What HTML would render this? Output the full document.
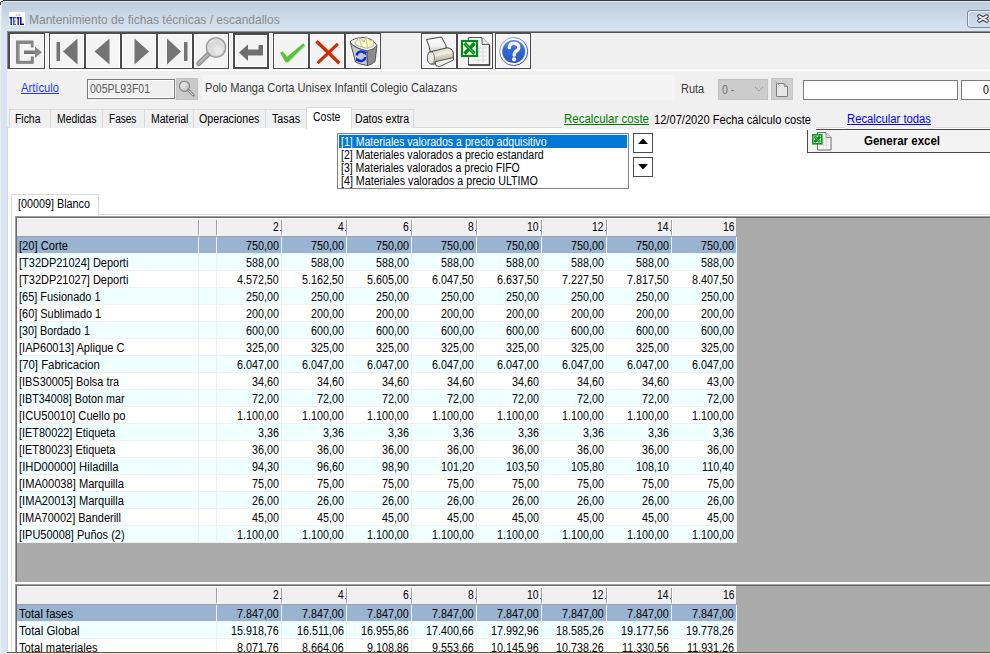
<!DOCTYPE html><html><head><meta charset="utf-8"><style>
*{margin:0;padding:0;box-sizing:border-box}
html,body{width:990px;height:654px;overflow:hidden;background:#f0f0f0;font-family:"Liberation Sans",sans-serif;font-size:12px;color:#000}
div,span,svg{position:absolute}
div{white-space:pre}
.t{line-height:13px;transform-origin:0 0}
.gb{background:#ababab;border-top:1px solid #a0a0a0;border-left:1px solid #a0a0a0;box-shadow:inset 1px 1px 0 #696969}
.hdr{background:#f0f0f0;border-top:1px solid #fff;border-bottom:1px solid #a0a0a0}
.hs{width:2px;border-left:1px solid #a0a0a0;border-right:1px solid #fff}
.hd{width:1px;height:1px;background:#6a3a7a}
.row{left:17px;width:720px;height:17px}
.sel{background:#99b4d1}
.cy{background:#f0ffff}
.wh{background:#fff}
.vs{width:1px;background:#f0f0f0}
.hsep{left:17px;width:720px;height:1px;background:#f0f0f0}
.btn{top:33px;width:36px;height:36px;border:1px solid #4b4b4b;background:#f4f4f4;box-shadow:inset 1px 1px 0 #fff,inset -1px -1px 0 #fff}
.tab{top:109px;height:19px;border:1px solid #d9d9d9;border-bottom:none;background:#f0f0f0}
</style></head><body>
<div style="left:0;top:0;width:1px;height:654px;background:#eaedf1"></div>
<div style="left:1px;top:0;width:6px;height:654px;background:#d9e5f2"></div>
<div style="left:0;top:0;width:990px;height:31px;background:linear-gradient(#bdccdc,#d7e4f1)"></div>
<div style="left:3px;top:0;width:987px;height:1px;background:#3a3a3a"></div>
<div style="left:0;top:0;width:3px;height:2px;background:#fff"></div>
<div style="left:0;top:0;width:1px;height:5px;background:#fff"></div>
<div style="left:1px;top:1px;width:2px;height:1px;background:#3a3a3a"></div>
<div style="left:0;top:2px;width:1px;height:3px;background:#3a3a3a"></div>
<div style="left:0;top:5px;width:1px;height:26px;background:#eef1f5"></div>
<div style="left:1px;top:2px;width:1px;height:29px;background:#dce6f0"></div>
<div style="left:3px;top:1px;width:987px;height:1px;background:#e2eaf5"></div>
<svg style="left:9px;top:12px" width="16" height="14" viewBox="0 0 16 14"><rect width="16" height="14" fill="#fff"/><text x="9" y="3.5" font-size="3" text-anchor="middle" fill="#888" font-family="Liberation Sans">a w</text><rect x="0.5" y="5" width="3" height="1.4" fill="#0000c0"/><rect x="1.5" y="5" width="1.3" height="8" fill="#0000c0"/><rect x="4" y="5" width="1.4" height="8" fill="#2a4dff"/><rect x="4" y="5" width="3" height="1.3" fill="#2a4dff"/><rect x="4" y="8.5" width="2.5" height="1.2" fill="#2a4dff"/><rect x="4" y="11.7" width="3" height="1.3" fill="#2a4dff"/><rect x="7.5" y="5" width="3" height="1.4" fill="#0000c0"/><rect x="8.5" y="5" width="1.3" height="8" fill="#0000c0"/><rect x="11" y="5" width="1.5" height="8" fill="#0000c0"/><rect x="11" y="11.6" width="4" height="1.4" fill="#0000c0"/></svg>
<div class="t" id="title" style="left:28.58px;top:13px;font-size:13px;color:#8c8c8c;transform:scaleX(0.9225);">Mantenimiento de fichas técnicas / escandallos</div>
<div style="left:967px;top:10px;width:30px;height:18px;border:1px solid #7d8ca6;border-radius:3px;background:linear-gradient(#c3d2e1,#d1dde9);box-shadow:inset 1px 1px 0 #e6eef6"></div>
<svg style="left:976px;top:13px" width="14" height="11" viewBox="0 0 14 11"><path d="M3.2 3.3 L10.8 7.7 M10.8 3.3 L3.2 7.7" stroke="#3a3f4a" stroke-width="4" stroke-linecap="round"/><path d="M3.2 3.3 L10.8 7.7 M10.8 3.3 L3.2 7.7" stroke="#f2f2f2" stroke-width="2" stroke-linecap="round"/></svg>
<div style="left:7px;top:31px;width:983px;height:1px;background:#8a8a8a"></div>
<div style="left:7px;top:32px;width:983px;height:1px;background:#505050"></div>
<div style="left:7px;top:31px;width:1px;height:38px;background:#8a8a8a"></div>
<div style="left:8px;top:32px;width:1px;height:37px;background:#505050"></div>
<div style="left:7px;top:69px;width:983px;height:1px;background:#f7f7f7"></div>
<div style="left:7px;top:70px;width:983px;height:1px;background:#fff"></div>
<div style="left:45px;top:33px;width:1px;height:36px;background:#fbfbfb"></div>
<div style="left:48px;top:33px;width:1px;height:36px;background:#fbfbfb"></div>
<div style="left:229px;top:33px;width:1px;height:36px;background:#fbfbfb"></div>
<div style="left:232px;top:33px;width:1px;height:36px;background:#fbfbfb"></div>
<div style="left:269px;top:33px;width:1px;height:36px;background:#fbfbfb"></div>
<div style="left:272px;top:33px;width:1px;height:36px;background:#fbfbfb"></div>
<div class="btn" style="left:9px;"></div>
<svg style="left:9px;top:33px" width="36" height="36" viewBox="0 0 36 36"><path d="M7 7.5 H24.5 V14.5 H21.8 V10.2 H9.7 V27.8 H21.8 V23.5 H24.5 V30.5 H7 Z" fill="#868686"/><path d="M9.7 10.2 H21.8 V11 H10.5 V27.8 H9.7Z" fill="#6c6c6c"/><path d="M7.5 30.5 H24.5 V23.5 H24 V30 H8Z" fill="#6c6c6c"/><rect x="15" y="17.5" width="11.5" height="3" fill="#7a7a7a"/><rect x="15" y="20" width="11.5" height="0.8" fill="#5e5e5e"/><path d="M26 13.5 L33 19.2 L26 25 Z" fill="#8a8a8a"/></svg>
<div class="btn" style="left:49px;"></div>
<svg style="left:49px;top:33px" width="36" height="36" viewBox="0 0 36 36"><rect x="7.5" y="9" width="3.5" height="19" fill="#747474"/><path d="M14 18.5 L28.5 5.5 V31.5 Z" fill="#747474"/></svg>
<div class="btn" style="left:85px;"></div>
<svg style="left:85px;top:33px" width="36" height="36" viewBox="0 0 36 36"><path d="M9.5 18.5 L24.5 5.5 V31.5 Z" fill="#747474"/></svg>
<div class="btn" style="left:121px;"></div>
<svg style="left:121px;top:33px" width="36" height="36" viewBox="0 0 36 36"><path d="M13.5 5.5 L28 18.5 L13.5 31.5 Z" fill="#747474"/></svg>
<div class="btn" style="left:157px;"></div>
<svg style="left:157px;top:33px" width="36" height="36" viewBox="0 0 36 36"><path d="M10 5.5 L24 18.5 L10 31.5 Z" fill="#747474"/><rect x="27" y="9" width="3.5" height="19" fill="#747474"/></svg>
<div class="btn" style="left:193px;"></div>
<svg style="left:193px;top:33px" width="36" height="36" viewBox="0 0 36 36"><circle cx="23" cy="14.5" r="9.7" fill="#dadada" stroke="#a0a0a0" stroke-width="1.6"/><circle cx="25.5" cy="17" r="4.5" fill="#e8e8e8"/><path d="M17 9 Q19 7 21 8" stroke="#f4f4f4" stroke-width="1" fill="none"/><path d="M5.8 30.5 L14.5 22" stroke="#8e8e8e" stroke-width="5.2" stroke-linecap="round"/><path d="M5.8 30.5 L14.5 22" stroke="#b4b4b4" stroke-width="2.6" stroke-linecap="round"/></svg>
<div class="btn" style="left:233px;border:2px solid #4b4b4b;"></div>
<svg style="left:233px;top:33px" width="36" height="36" viewBox="0 0 36 36"><path d="M6 19.5 L15 11.5 V16.5 H25.5 V12 H30 V22.5 H15 V28 Z" fill="#6e6e6e"/></svg>
<div class="btn" style="left:273px;"></div>
<svg style="left:273px;top:33px" width="36" height="36" viewBox="0 0 36 36"><path d="M7 19.6 L9.8 18.4 L13.9 23.8 L30.4 10.2 L31.8 12.1 L14.6 29.2 L12.6 29.4 Z" fill="#52c82a"/><path d="M14.6 29.2 L31.8 12.1 L32.2 13 L15 30 Z" fill="#7a8a70" opacity=".5"/></svg>
<div class="btn" style="left:309px;"></div>
<svg style="left:309px;top:33px" width="36" height="36" viewBox="0 0 36 36"><path d="M7.5 8.3 L30.3 30.3" stroke="#d42800" stroke-width="3.4"/><path d="M28.8 10.8 L8.6 30.2" stroke="#d42800" stroke-width="3"/></svg>
<div class="btn" style="left:345px;"></div>
<svg style="left:345px;top:33px" width="36" height="36" viewBox="0 0 36 36"><path d="M5.5 10 Q10 15.5 22 17.8 L22.5 32.5 Q15 31.5 10.5 29 Z" fill="#c9c9c9" stroke="#4a4a4a" stroke-width="0.9"/><path d="M22 17.8 Q29 17 32 12.5 L30 28.5 Q27 31.5 22.5 32.5 Z" fill="#8c8c8c" stroke="#4a4a4a" stroke-width="0.9"/><path d="M5 9 Q8 5 18 4.5 Q28 5 32 12.5 Q29 17 22 17.8 Q9 15 5 9 Z" fill="#f6f6f6" stroke="#4a4a4a" stroke-width="0.9"/><path d="M8.5 9.5 Q11 7 18 6.5 Q26 7 29.5 12.3 Q26 15.3 22 15.8 Q12 13.5 8.5 9.5 Z" fill="#dcdcdc"/><path d="M10 10 L14 4.5 L19 9 L21 3.5 L25.5 8 L28 7 L29 12.5 L22 15.5 L12 12.5 Z" fill="#fbf8c4" stroke="#9a9a80" stroke-width="0.6"/><path d="M14 4.5 L17 14 M21 3.5 L22.5 15" stroke="#b0b098" stroke-width="0.7"/><path d="M11.8 22.5 A4.2 4.2 0 0 1 19.6 20.5" stroke="#0a2ae8" stroke-width="2.4" fill="none"/><path d="M17.5 18 L21.5 18.5 L20.5 22.5 Z" fill="#0a2ae8"/><path d="M20.2 24 A4.2 4.2 0 0 1 12.4 26" stroke="#0a2ae8" stroke-width="2.4" fill="none"/><path d="M14.5 28.5 L10.5 28 L11.5 24 Z" fill="#0a2ae8"/></svg>
<div class="btn" style="left:421px;"></div>
<svg style="left:421px;top:33px" width="36" height="36" viewBox="0 0 36 36"><defs><linearGradient id="pp" x1="0" y1="0" x2="0" y2="1"><stop offset="0" stop-color="#fdfdfd"/><stop offset="0.55" stop-color="#f2f2f2"/><stop offset="1" stop-color="#c4c4c4"/></linearGradient><linearGradient id="pb" x1="0" y1="0" x2="0" y2="1"><stop offset="0" stop-color="#ede9dd"/><stop offset="0.5" stop-color="#d9d3c2"/><stop offset="1" stop-color="#a9a290"/></linearGradient></defs><path d="M5.5 6.5 L20.5 4 L24.5 11.5 L25.5 15.5 L9.5 20 Q8.5 13 5.5 6.5 Z" fill="url(#pp)" stroke="#2e2e2e" stroke-width="0.9"/><path d="M7 20.5 Q8 18.8 10.5 18.6 L26 14.8 Q31 15 32.3 19.5 L32.3 25.2 L16.5 30.8 L10.5 31.2 Q6.5 30.5 6.5 25.5 Z" fill="url(#pb)" stroke="#2e2e2e" stroke-width="0.9"/><path d="M12 21 L27.5 17.3 Q30 17.5 30.5 20 L14 24 Z" fill="#f2efe6" opacity=".8"/><ellipse cx="10" cy="25" rx="3.6" ry="6" fill="#ece9e0" stroke="#5a5a5a" stroke-width="0.7"/><path d="M14 28.8 L32.2 24.6 L32.6 27 L18.5 33.6 L15 32.6 Z" fill="#f3f1ea" stroke="#2e2e2e" stroke-width="0.8"/></svg>
<div class="btn" style="left:457px;"></div>
<svg style="left:457px;top:33px" width="36" height="36" viewBox="0 0 36 36"><path d="M11.5 4.5 H25 L32.5 12 V32 H11.5 Z" fill="#fafafa" stroke="#5a5a5a" stroke-width="1"/><path d="M32.5 12 V32 H11.5" fill="none" stroke="#3a3a3a" stroke-width="1.4"/><path d="M25 4.5 V11.5 H32.5" fill="#e4e4e4" stroke="#5a5a5a" stroke-width="1"/><path d="M15 15 H30 M15 19 H30 M15 23 H30 M15 27 H30 M21 13 V30 M26 13 V30" stroke="#d0d0d0" stroke-width="0.8"/><rect x="5" y="8" width="15" height="15" fill="#eef7ee" stroke="#008a1a" stroke-width="2.2"/><path d="M7.5 10.2 L17.5 20.8 M17.5 10.2 L7.5 20.8" stroke="#0a8a16" stroke-width="3.6"/><path d="M8 10.6 L17 20.4" stroke="#8fe08f" stroke-width="0.7"/></svg>
<div class="btn" style="left:495px;"></div>
<svg style="left:495px;top:33px" width="36" height="36" viewBox="0 0 36 36"><defs><linearGradient id="hb" x1="0" y1="0" x2="0" y2="1"><stop offset="0" stop-color="#5b8cf0"/><stop offset="0.45" stop-color="#3166d6"/><stop offset="1" stop-color="#2a5cc8"/></linearGradient><linearGradient id="hr" x1="0" y1="0" x2="1" y2="1"><stop offset="0" stop-color="#a9b8e8"/><stop offset="1" stop-color="#2a3558"/></linearGradient></defs><circle cx="18.7" cy="18.5" r="14" fill="#fdfdff" stroke="url(#hr)" stroke-width="1"/><circle cx="18.7" cy="18.6" r="11.5" fill="url(#hb)"/><path d="M14.3 14.6 Q14.2 10.4 18.9 10.4 Q23.7 10.4 23.7 14.3 Q23.7 16.9 21.1 18.2 Q19.2 19.3 19.2 22.2" stroke="#fff" stroke-width="3.3" fill="none" stroke-linecap="round"/><circle cx="19.1" cy="26.3" r="2.1" fill="#fff"/></svg>
<div class="t" id="art" style="left:21.07px;top:82px;font-size:12px;color:#1f3cf0;text-decoration:underline;transform:scaleX(0.9339);">Artículo</div>
<div style="left:87px;top:79px;width:88px;height:20px;border:1px solid #7a7a7a;background:#f0f0f0;box-shadow:inset 1px 1px 0 #fff,inset -1px -1px 0 #fff"></div>
<div class="t" id="cod" style="left:90.13px;top:83px;font-size:12px;color:#5a5a5a;transform:scaleX(0.8730);">005PL93F01</div>
<div style="left:176px;top:78px;width:22px;height:22px;background:#cacaca;border:1px solid #c3c3c3"></div>
<svg style="left:176px;top:78px" width="22" height="22" viewBox="0 0 22 22"><defs><radialGradient id="lg" cx="0.4" cy="0.4" r="0.7"><stop offset="0" stop-color="#ececec"/><stop offset="1" stop-color="#b9b9b9"/></radialGradient></defs><circle cx="8.5" cy="8.3" r="5.1" fill="url(#lg)" stroke="#858585" stroke-width="1.1"/><path d="M12.2 12.1 L17.4 17.3" stroke="#8a8a8a" stroke-width="2.8" stroke-linecap="round"/><path d="M12.6 12.5 L17 16.9" stroke="#dedede" stroke-width="1"/></svg>
<div style="left:202px;top:75px;width:473px;height:25px;background:#f4f4f4"></div>
<div class="t" id="desc" style="left:205.08px;top:82px;font-size:12px;color:#3a3a3a;transform:scaleX(0.9245);">Polo Manga Corta Unisex Infantil Colegio Calazans</div>
<div class="t" id="ruta" style="left:681.18px;top:83px;font-size:12px;color:#3c3c3c;transform:scaleX(0.9151);">Ruta</div>
<div style="left:718px;top:79px;width:50px;height:21px;background:#cccccc;border:1px solid #c2c2c2"></div>
<div class="t" id="combo" style="left:721.62px;top:84px;font-size:12px;color:#707070;transform:scaleX(0.8800);">0 -</div>
<svg style="left:753px;top:85px" width="12" height="8" viewBox="0 0 12 8"><path d="M2 2 L6 6 L10 2" stroke="#9a9a9a" stroke-width="1" fill="none"/></svg>
<div style="left:771px;top:78px;width:22px;height:22px;background:#cfcfcf;border:1px solid #c6c6c6"></div>
<svg style="left:771px;top:78px" width="22" height="22" viewBox="0 0 22 22"><path d="M5.5 5.5 H13 L16.5 9 V18.5 H5.5 Z" fill="#e6e6e6" stroke="#7e7e7e" stroke-width="1" stroke-linejoin="miter"/><path d="M13 5.5 L13.5 8.5 H16.5" fill="none" stroke="#8a8a8a" stroke-width="1"/><path d="M4.5 3.5 L9.5 8.5" stroke="#9a9a9a" stroke-width="0.8"/></svg>
<div style="left:803px;top:80px;width:155px;height:20px;background:#fff;border:1px solid #7a7a7a"></div>
<div style="left:961px;top:80px;width:40px;height:20px;background:#fff;border:1px solid #7a7a7a"></div>
<div class="t" id="tb0" style="left:982.72px;top:84px;font-size:12px;color:#000;transform:scaleX(0.8800);">0</div>
<div style="left:7px;top:127px;width:983px;height:527px;background:#fff;border-left:1px solid #d9d9d9;border-top:1px solid #d9d9d9"></div>
<div class="tab" style="left:9px;width:42px"></div>
<div class="tab" style="left:50px;width:53px"></div>
<div class="tab" style="left:102px;width:43px"></div>
<div class="tab" style="left:144px;width:50px"></div>
<div class="tab" style="left:193px;width:73px"></div>
<div class="tab" style="left:265px;width:42px"></div>
<div class="tab" style="left:351px;width:63px"></div>
<div class="tab" style="left:306px;width:46px;top:107px;height:22px;background:#fff"></div>
<div class="t" id="tab_Ficha" style="left:14.73px;top:113px;font-size:12px;color:#000;transform:scaleX(0.8672);">Ficha</div>
<div class="t" id="tab_Medidas" style="left:56.73px;top:113px;font-size:12px;color:#000;transform:scaleX(0.8693);">Medidas</div>
<div class="t" id="tab_Fases" style="left:108.76px;top:113px;font-size:12px;color:#000;transform:scaleX(0.8385);">Fases</div>
<div class="t" id="tab_Material" style="left:150.72px;top:113px;font-size:12px;color:#000;transform:scaleX(0.8772);">Material</div>
<div class="t" id="tab_Operaciones" style="left:198.71px;top:113px;font-size:12px;color:#000;transform:scaleX(0.8876);">Operaciones</div>
<div class="t" id="tab_Tasas" style="left:272.11px;top:113px;font-size:12px;color:#000;transform:scaleX(0.8929);">Tasas</div>
<div class="t" id="tab_Datos extra" style="left:355.12px;top:113px;font-size:12px;color:#000;transform:scaleX(0.8801);">Datos extra</div>
<div class="t" id="tab_Coste" style="left:312.73px;top:111px;font-size:12px;color:#000;transform:scaleX(0.8739);">Coste</div>
<div style="left:562px;top:108px;width:428px;height:19px;background:#f0f0f0"></div>
<div style="left:562px;top:127px;width:254px;height:2px;background:#f0f0f0"></div>
<div style="left:845px;top:127px;width:89px;height:2px;background:#f0f0f0"></div>
<div style="left:816px;top:127px;width:29px;height:1px;background:#d9d9d9"></div>
<div style="left:934px;top:127px;width:32px;height:1px;background:#d9d9d9"></div>
<div style="left:986px;top:127px;width:4px;height:1px;background:#d9d9d9"></div>
<div style="left:807px;top:129px;width:200px;height:24px;background:#f3f3f3;border-left:1px solid #4a4a4a;border-bottom:1px solid #4a4a4a"></div>
<div style="left:816px;top:129px;width:174px;height:1px;background:#4a4a4a"></div>
<div style="left:807px;top:129px;width:9px;height:1px;background:#f3f3f3"></div>
<div class="t" id="rc" style="left:563.54px;top:113px;font-size:12px;color:#008000;text-decoration:underline;transform:scaleX(0.9584);">Recalcular coste</div>
<div class="t" id="fecha" style="left:654.07px;top:114px;font-size:12px;color:#000;transform:scaleX(0.9265);">12/07/2020 Fecha cálculo coste</div>
<div class="t" id="rt" style="left:847.06px;top:113px;font-size:12px;color:#0000ff;text-decoration:underline;transform:scaleX(0.9397);">Recalcular todas</div>
<svg style="left:808px;top:129px" width="28" height="24" viewBox="0 0 28 24"><path d="M9.5 3.5 H18 L23 8.5 V21 H9.5 Z" fill="#f8f8f8" stroke="#6a6a6a" stroke-width="1"/><path d="M18 3.5 V8.5 H23" fill="#dcdcdc" stroke="#8a8a8a" stroke-width="1"/><path d="M12 10 H21 M12 13 H21 M12 16 H21 M15.5 9 V20 M18.5 9 V20" stroke="#d6d6d6" stroke-width="0.8"/><rect x="4.8" y="5.8" width="9" height="9" fill="#e6f4e6" stroke="#0f9a1f" stroke-width="1.6"/><path d="M6.5 7.5 L12 13.2 M12 7.5 L6.5 13.2" stroke="#0a8a16" stroke-width="2.6"/><path d="M6.8 7.8 L11.8 13" stroke="#9be09b" stroke-width="0.6"/></svg>
<div class="t" id="ge" style="left:863.54px;top:135px;font-size:12px;font-weight:bold;color:#000;transform:scaleX(0.9573);">Generar excel</div>
<div style="left:337px;top:133px;width:292px;height:56px;border:1px solid #828282;background:#fff"></div>
<div style="left:339px;top:135px;width:288px;height:13px;background:#0078d7"></div>
<div class="t" id="lb0" style="left:341.12px;top:136px;font-size:12px;color:#fff;transform:scaleX(0.8803);">[1] Materiales valorados a precio adquisitivo</div>
<div class="t" id="lb1" style="left:341.12px;top:149px;font-size:12px;color:#000;transform:scaleX(0.8804);">[2] Materiales valorados a precio estandard</div>
<div class="t" id="lb2" style="left:341.12px;top:162px;font-size:12px;color:#000;transform:scaleX(0.8760);">[3] Materiales valorados a precio FIFO</div>
<div class="t" id="lb3" style="left:341.11px;top:175px;font-size:12px;color:#000;transform:scaleX(0.8896);">[4] Materiales valorados a precio ULTIMO</div>
<div style="left:633px;top:133px;width:20px;height:20px;border:1px solid #4a4a4a;background:#fff"></div>
<svg style="left:633px;top:133px" width="20" height="20"><path d="M5 11 L10 5.5 L15 11 Z" fill="#000"/></svg>
<div style="left:633px;top:157px;width:20px;height:20px;border:1px solid #4a4a4a;background:#fff"></div>
<svg style="left:633px;top:157px" width="20" height="20"><path d="M5 7 L15 7 L10 12.5 Z" fill="#000"/></svg>
<div style="left:11px;top:214px;width:979px;height:440px;border-left:1px solid #d9d9d9;border-top:1px solid #d9d9d9;background:#fff"></div>
<div style="left:11px;top:194px;width:88px;height:21px;border:1px solid #d9d9d9;border-bottom:none;background:#fff"></div>
<div class="t" id="blanco" style="left:18.10px;top:198px;font-size:12px;color:#000;transform:scaleX(0.8993);">[00009] Blanco</div>
<div class="gb" style="left:15px;top:216px;width:975px;height:366px"></div>
<div class="hdr" style="left:17px;top:218px;width:719px;height:19px"></div>
<div class="hs" style="left:198px;top:220px;height:15px"></div>
<div class="hs" style="left:216px;top:220px;height:15px"></div>
<div class="hs" style="left:281px;top:220px;height:15px"></div>
<div class="hs" style="left:346px;top:220px;height:15px"></div>
<div class="hs" style="left:411px;top:220px;height:15px"></div>
<div class="hs" style="left:476px;top:220px;height:15px"></div>
<div class="hs" style="left:541px;top:220px;height:15px"></div>
<div class="hs" style="left:606px;top:220px;height:15px"></div>
<div class="hs" style="left:671px;top:220px;height:15px"></div>
<div class="t" id="g1h0" style="left:273.05px;top:221px;font-size:12px;color:#000;transform:scaleX(0.8600);">2</div>
<div class="hd" style="left:280px;top:230px"></div>
<div class="t" id="g1h1" style="left:338.05px;top:221px;font-size:12px;color:#000;transform:scaleX(0.8600);">4</div>
<div class="hd" style="left:345px;top:230px"></div>
<div class="t" id="g1h2" style="left:403.05px;top:221px;font-size:12px;color:#000;transform:scaleX(0.8600);">6</div>
<div class="hd" style="left:410px;top:230px"></div>
<div class="t" id="g1h3" style="left:468.05px;top:221px;font-size:12px;color:#000;transform:scaleX(0.8600);">8</div>
<div class="hd" style="left:475px;top:230px"></div>
<div class="t" id="g1h4" style="left:527.31px;top:221px;font-size:12px;color:#000;transform:scaleX(0.8600);">10</div>
<div class="hd" style="left:540px;top:230px"></div>
<div class="t" id="g1h5" style="left:592.31px;top:221px;font-size:12px;color:#000;transform:scaleX(0.8600);">12</div>
<div class="hd" style="left:605px;top:230px"></div>
<div class="t" id="g1h6" style="left:657.31px;top:221px;font-size:12px;color:#000;transform:scaleX(0.8600);">14</div>
<div class="hd" style="left:670px;top:230px"></div>
<div class="t" id="g1h7" style="left:723.11px;top:221px;font-size:12px;color:#000;transform:scaleX(0.8600);">16</div>
<div class="row sel" style="top:237px"></div>
<div class="row cy" style="top:254px"></div>
<div class="row wh" style="top:271px"></div>
<div class="row cy" style="top:288px"></div>
<div class="row wh" style="top:305px"></div>
<div class="row cy" style="top:322px"></div>
<div class="row wh" style="top:339px"></div>
<div class="row cy" style="top:356px"></div>
<div class="row wh" style="top:373px"></div>
<div class="row cy" style="top:390px"></div>
<div class="row wh" style="top:407px"></div>
<div class="row cy" style="top:424px"></div>
<div class="row wh" style="top:441px"></div>
<div class="row cy" style="top:458px"></div>
<div class="row wh" style="top:475px"></div>
<div class="row cy" style="top:492px"></div>
<div class="row wh" style="top:509px"></div>
<div class="row cy" style="top:526px"></div>
<div class="vs" style="left:198px;top:237px;height:306px"></div>
<div class="vs" style="left:216px;top:237px;height:306px"></div>
<div class="vs" style="left:281px;top:237px;height:306px"></div>
<div class="vs" style="left:346px;top:237px;height:306px"></div>
<div class="vs" style="left:411px;top:237px;height:306px"></div>
<div class="vs" style="left:476px;top:237px;height:306px"></div>
<div class="vs" style="left:541px;top:237px;height:306px"></div>
<div class="vs" style="left:606px;top:237px;height:306px"></div>
<div class="vs" style="left:671px;top:237px;height:306px"></div>
<div class="vs" style="left:736px;top:237px;height:306px"></div>
<div class="hsep" style="top:253px"></div>
<div class="hsep" style="top:270px"></div>
<div class="hsep" style="top:287px"></div>
<div class="hsep" style="top:304px"></div>
<div class="hsep" style="top:321px"></div>
<div class="hsep" style="top:338px"></div>
<div class="hsep" style="top:355px"></div>
<div class="hsep" style="top:372px"></div>
<div class="hsep" style="top:389px"></div>
<div class="hsep" style="top:406px"></div>
<div class="hsep" style="top:423px"></div>
<div class="hsep" style="top:440px"></div>
<div class="hsep" style="top:457px"></div>
<div class="hsep" style="top:474px"></div>
<div class="hsep" style="top:491px"></div>
<div class="hsep" style="top:508px"></div>
<div class="hsep" style="top:525px"></div>
<div class="hsep" style="top:542px"></div>
<div class="t" id="g1r0" style="left:18.57px;top:240px;font-size:12px;color:#000;transform:scaleX(0.9291);">[20] Corte</div>
<div class="t" id="g1r0v0" style="left:245.95px;top:240px;font-size:12px;color:#000;transform:scaleX(0.8950);">750,00</div>
<div class="t" id="g1r0v1" style="left:310.95px;top:240px;font-size:12px;color:#000;transform:scaleX(0.8950);">750,00</div>
<div class="t" id="g1r0v2" style="left:375.95px;top:240px;font-size:12px;color:#000;transform:scaleX(0.8950);">750,00</div>
<div class="t" id="g1r0v3" style="left:440.95px;top:240px;font-size:12px;color:#000;transform:scaleX(0.8950);">750,00</div>
<div class="t" id="g1r0v4" style="left:505.95px;top:240px;font-size:12px;color:#000;transform:scaleX(0.8950);">750,00</div>
<div class="t" id="g1r0v5" style="left:570.95px;top:240px;font-size:12px;color:#000;transform:scaleX(0.8950);">750,00</div>
<div class="t" id="g1r0v6" style="left:635.95px;top:240px;font-size:12px;color:#000;transform:scaleX(0.8950);">750,00</div>
<div class="t" id="g1r0v7" style="left:700.95px;top:240px;font-size:12px;color:#000;transform:scaleX(0.8950);">750,00</div>
<div class="t" id="g1r1" style="left:18.58px;top:257px;font-size:12px;color:#000;transform:scaleX(0.9157);">[T32DP21024] Deporti</div>
<div class="t" id="g1r1v0" style="left:245.95px;top:257px;font-size:12px;color:#000;transform:scaleX(0.8950);">588,00</div>
<div class="t" id="g1r1v1" style="left:310.95px;top:257px;font-size:12px;color:#000;transform:scaleX(0.8950);">588,00</div>
<div class="t" id="g1r1v2" style="left:375.95px;top:257px;font-size:12px;color:#000;transform:scaleX(0.8950);">588,00</div>
<div class="t" id="g1r1v3" style="left:440.95px;top:257px;font-size:12px;color:#000;transform:scaleX(0.8950);">588,00</div>
<div class="t" id="g1r1v4" style="left:505.95px;top:257px;font-size:12px;color:#000;transform:scaleX(0.8950);">588,00</div>
<div class="t" id="g1r1v5" style="left:570.95px;top:257px;font-size:12px;color:#000;transform:scaleX(0.8950);">588,00</div>
<div class="t" id="g1r1v6" style="left:635.95px;top:257px;font-size:12px;color:#000;transform:scaleX(0.8950);">588,00</div>
<div class="t" id="g1r1v7" style="left:700.95px;top:257px;font-size:12px;color:#000;transform:scaleX(0.8950);">588,00</div>
<div class="t" id="g1r2" style="left:18.58px;top:274px;font-size:12px;color:#000;transform:scaleX(0.9157);">[T32DP21027] Deporti</div>
<div class="t" id="g1r2v0" style="left:236.99px;top:274px;font-size:12px;color:#000;transform:scaleX(0.8950);">4.572,50</div>
<div class="t" id="g1r2v1" style="left:301.99px;top:274px;font-size:12px;color:#000;transform:scaleX(0.8950);">5.162,50</div>
<div class="t" id="g1r2v2" style="left:366.99px;top:274px;font-size:12px;color:#000;transform:scaleX(0.8950);">5.605,00</div>
<div class="t" id="g1r2v3" style="left:431.99px;top:274px;font-size:12px;color:#000;transform:scaleX(0.8950);">6.047,50</div>
<div class="t" id="g1r2v4" style="left:496.99px;top:274px;font-size:12px;color:#000;transform:scaleX(0.8950);">6.637,50</div>
<div class="t" id="g1r2v5" style="left:561.99px;top:274px;font-size:12px;color:#000;transform:scaleX(0.8950);">7.227,50</div>
<div class="t" id="g1r2v6" style="left:626.99px;top:274px;font-size:12px;color:#000;transform:scaleX(0.8950);">7.817,50</div>
<div class="t" id="g1r2v7" style="left:691.99px;top:274px;font-size:12px;color:#000;transform:scaleX(0.8950);">8.407,50</div>
<div class="t" id="g1r3" style="left:18.59px;top:291px;font-size:12px;color:#000;transform:scaleX(0.9128);">[65] Fusionado 1</div>
<div class="t" id="g1r3v0" style="left:245.95px;top:291px;font-size:12px;color:#000;transform:scaleX(0.8950);">250,00</div>
<div class="t" id="g1r3v1" style="left:310.95px;top:291px;font-size:12px;color:#000;transform:scaleX(0.8950);">250,00</div>
<div class="t" id="g1r3v2" style="left:375.95px;top:291px;font-size:12px;color:#000;transform:scaleX(0.8950);">250,00</div>
<div class="t" id="g1r3v3" style="left:440.95px;top:291px;font-size:12px;color:#000;transform:scaleX(0.8950);">250,00</div>
<div class="t" id="g1r3v4" style="left:505.95px;top:291px;font-size:12px;color:#000;transform:scaleX(0.8950);">250,00</div>
<div class="t" id="g1r3v5" style="left:570.95px;top:291px;font-size:12px;color:#000;transform:scaleX(0.8950);">250,00</div>
<div class="t" id="g1r3v6" style="left:635.95px;top:291px;font-size:12px;color:#000;transform:scaleX(0.8950);">250,00</div>
<div class="t" id="g1r3v7" style="left:700.95px;top:291px;font-size:12px;color:#000;transform:scaleX(0.8950);">250,00</div>
<div class="t" id="g1r4" style="left:18.59px;top:308px;font-size:12px;color:#000;transform:scaleX(0.9128);">[60] Sublimado 1</div>
<div class="t" id="g1r4v0" style="left:245.95px;top:308px;font-size:12px;color:#000;transform:scaleX(0.8950);">200,00</div>
<div class="t" id="g1r4v1" style="left:310.95px;top:308px;font-size:12px;color:#000;transform:scaleX(0.8950);">200,00</div>
<div class="t" id="g1r4v2" style="left:375.95px;top:308px;font-size:12px;color:#000;transform:scaleX(0.8950);">200,00</div>
<div class="t" id="g1r4v3" style="left:440.95px;top:308px;font-size:12px;color:#000;transform:scaleX(0.8950);">200,00</div>
<div class="t" id="g1r4v4" style="left:505.95px;top:308px;font-size:12px;color:#000;transform:scaleX(0.8950);">200,00</div>
<div class="t" id="g1r4v5" style="left:570.95px;top:308px;font-size:12px;color:#000;transform:scaleX(0.8950);">200,00</div>
<div class="t" id="g1r4v6" style="left:635.95px;top:308px;font-size:12px;color:#000;transform:scaleX(0.8950);">200,00</div>
<div class="t" id="g1r4v7" style="left:700.95px;top:308px;font-size:12px;color:#000;transform:scaleX(0.8950);">200,00</div>
<div class="t" id="g1r5" style="left:18.60px;top:325px;font-size:12px;color:#000;transform:scaleX(0.9004);">[30] Bordado 1</div>
<div class="t" id="g1r5v0" style="left:245.95px;top:325px;font-size:12px;color:#000;transform:scaleX(0.8950);">600,00</div>
<div class="t" id="g1r5v1" style="left:310.95px;top:325px;font-size:12px;color:#000;transform:scaleX(0.8950);">600,00</div>
<div class="t" id="g1r5v2" style="left:375.95px;top:325px;font-size:12px;color:#000;transform:scaleX(0.8950);">600,00</div>
<div class="t" id="g1r5v3" style="left:440.95px;top:325px;font-size:12px;color:#000;transform:scaleX(0.8950);">600,00</div>
<div class="t" id="g1r5v4" style="left:505.95px;top:325px;font-size:12px;color:#000;transform:scaleX(0.8950);">600,00</div>
<div class="t" id="g1r5v5" style="left:570.95px;top:325px;font-size:12px;color:#000;transform:scaleX(0.8950);">600,00</div>
<div class="t" id="g1r5v6" style="left:635.95px;top:325px;font-size:12px;color:#000;transform:scaleX(0.8950);">600,00</div>
<div class="t" id="g1r5v7" style="left:700.95px;top:325px;font-size:12px;color:#000;transform:scaleX(0.8950);">600,00</div>
<div class="t" id="g1r6" style="left:18.57px;top:342px;font-size:12px;color:#000;transform:scaleX(0.9257);">[IAP60013] Aplique C</div>
<div class="t" id="g1r6v0" style="left:245.95px;top:342px;font-size:12px;color:#000;transform:scaleX(0.8950);">325,00</div>
<div class="t" id="g1r6v1" style="left:310.95px;top:342px;font-size:12px;color:#000;transform:scaleX(0.8950);">325,00</div>
<div class="t" id="g1r6v2" style="left:375.95px;top:342px;font-size:12px;color:#000;transform:scaleX(0.8950);">325,00</div>
<div class="t" id="g1r6v3" style="left:440.95px;top:342px;font-size:12px;color:#000;transform:scaleX(0.8950);">325,00</div>
<div class="t" id="g1r6v4" style="left:505.95px;top:342px;font-size:12px;color:#000;transform:scaleX(0.8950);">325,00</div>
<div class="t" id="g1r6v5" style="left:570.95px;top:342px;font-size:12px;color:#000;transform:scaleX(0.8950);">325,00</div>
<div class="t" id="g1r6v6" style="left:635.95px;top:342px;font-size:12px;color:#000;transform:scaleX(0.8950);">325,00</div>
<div class="t" id="g1r6v7" style="left:700.95px;top:342px;font-size:12px;color:#000;transform:scaleX(0.8950);">325,00</div>
<div class="t" id="g1r7" style="left:18.55px;top:359px;font-size:12px;color:#000;transform:scaleX(0.9478);">[70] Fabricacion</div>
<div class="t" id="g1r7v0" style="left:236.99px;top:359px;font-size:12px;color:#000;transform:scaleX(0.8950);">6.047,00</div>
<div class="t" id="g1r7v1" style="left:301.99px;top:359px;font-size:12px;color:#000;transform:scaleX(0.8950);">6.047,00</div>
<div class="t" id="g1r7v2" style="left:366.99px;top:359px;font-size:12px;color:#000;transform:scaleX(0.8950);">6.047,00</div>
<div class="t" id="g1r7v3" style="left:431.99px;top:359px;font-size:12px;color:#000;transform:scaleX(0.8950);">6.047,00</div>
<div class="t" id="g1r7v4" style="left:496.99px;top:359px;font-size:12px;color:#000;transform:scaleX(0.8950);">6.047,00</div>
<div class="t" id="g1r7v5" style="left:561.99px;top:359px;font-size:12px;color:#000;transform:scaleX(0.8950);">6.047,00</div>
<div class="t" id="g1r7v6" style="left:626.99px;top:359px;font-size:12px;color:#000;transform:scaleX(0.8950);">6.047,00</div>
<div class="t" id="g1r7v7" style="left:691.99px;top:359px;font-size:12px;color:#000;transform:scaleX(0.8950);">6.047,00</div>
<div class="t" id="g1r8" style="left:18.59px;top:376px;font-size:12px;color:#000;transform:scaleX(0.9101);">[IBS30005] Bolsa tra</div>
<div class="t" id="g1r8v0" style="left:251.92px;top:376px;font-size:12px;color:#000;transform:scaleX(0.8950);">34,60</div>
<div class="t" id="g1r8v1" style="left:316.92px;top:376px;font-size:12px;color:#000;transform:scaleX(0.8950);">34,60</div>
<div class="t" id="g1r8v2" style="left:381.92px;top:376px;font-size:12px;color:#000;transform:scaleX(0.8950);">34,60</div>
<div class="t" id="g1r8v3" style="left:446.92px;top:376px;font-size:12px;color:#000;transform:scaleX(0.8950);">34,60</div>
<div class="t" id="g1r8v4" style="left:511.92px;top:376px;font-size:12px;color:#000;transform:scaleX(0.8950);">34,60</div>
<div class="t" id="g1r8v5" style="left:576.92px;top:376px;font-size:12px;color:#000;transform:scaleX(0.8950);">34,60</div>
<div class="t" id="g1r8v6" style="left:641.92px;top:376px;font-size:12px;color:#000;transform:scaleX(0.8950);">34,60</div>
<div class="t" id="g1r8v7" style="left:706.92px;top:376px;font-size:12px;color:#000;transform:scaleX(0.8950);">43,00</div>
<div class="t" id="g1r9" style="left:18.60px;top:393px;font-size:12px;color:#000;transform:scaleX(0.8987);">[IBT34008] Boton mar</div>
<div class="t" id="g1r9v0" style="left:251.92px;top:393px;font-size:12px;color:#000;transform:scaleX(0.8950);">72,00</div>
<div class="t" id="g1r9v1" style="left:316.92px;top:393px;font-size:12px;color:#000;transform:scaleX(0.8950);">72,00</div>
<div class="t" id="g1r9v2" style="left:381.92px;top:393px;font-size:12px;color:#000;transform:scaleX(0.8950);">72,00</div>
<div class="t" id="g1r9v3" style="left:446.92px;top:393px;font-size:12px;color:#000;transform:scaleX(0.8950);">72,00</div>
<div class="t" id="g1r9v4" style="left:511.92px;top:393px;font-size:12px;color:#000;transform:scaleX(0.8950);">72,00</div>
<div class="t" id="g1r9v5" style="left:576.92px;top:393px;font-size:12px;color:#000;transform:scaleX(0.8950);">72,00</div>
<div class="t" id="g1r9v6" style="left:641.92px;top:393px;font-size:12px;color:#000;transform:scaleX(0.8950);">72,00</div>
<div class="t" id="g1r9v7" style="left:706.92px;top:393px;font-size:12px;color:#000;transform:scaleX(0.8950);">72,00</div>
<div class="t" id="g1r10" style="left:18.57px;top:410px;font-size:12px;color:#000;transform:scaleX(0.9271);">[ICU50010] Cuello po</div>
<div class="t" id="g1r10v0" style="left:236.99px;top:410px;font-size:12px;color:#000;transform:scaleX(0.8950);">1.100,00</div>
<div class="t" id="g1r10v1" style="left:301.99px;top:410px;font-size:12px;color:#000;transform:scaleX(0.8950);">1.100,00</div>
<div class="t" id="g1r10v2" style="left:366.99px;top:410px;font-size:12px;color:#000;transform:scaleX(0.8950);">1.100,00</div>
<div class="t" id="g1r10v3" style="left:431.99px;top:410px;font-size:12px;color:#000;transform:scaleX(0.8950);">1.100,00</div>
<div class="t" id="g1r10v4" style="left:496.99px;top:410px;font-size:12px;color:#000;transform:scaleX(0.8950);">1.100,00</div>
<div class="t" id="g1r10v5" style="left:561.99px;top:410px;font-size:12px;color:#000;transform:scaleX(0.8950);">1.100,00</div>
<div class="t" id="g1r10v6" style="left:626.99px;top:410px;font-size:12px;color:#000;transform:scaleX(0.8950);">1.100,00</div>
<div class="t" id="g1r10v7" style="left:691.99px;top:410px;font-size:12px;color:#000;transform:scaleX(0.8950);">1.100,00</div>
<div class="t" id="g1r11" style="left:18.59px;top:427px;font-size:12px;color:#000;transform:scaleX(0.9091);">[IET80022] Etiqueta</div>
<div class="t" id="g1r11v0" style="left:257.89px;top:427px;font-size:12px;color:#000;transform:scaleX(0.8950);">3,36</div>
<div class="t" id="g1r11v1" style="left:322.89px;top:427px;font-size:12px;color:#000;transform:scaleX(0.8950);">3,36</div>
<div class="t" id="g1r11v2" style="left:387.89px;top:427px;font-size:12px;color:#000;transform:scaleX(0.8950);">3,36</div>
<div class="t" id="g1r11v3" style="left:452.89px;top:427px;font-size:12px;color:#000;transform:scaleX(0.8950);">3,36</div>
<div class="t" id="g1r11v4" style="left:517.89px;top:427px;font-size:12px;color:#000;transform:scaleX(0.8950);">3,36</div>
<div class="t" id="g1r11v5" style="left:582.89px;top:427px;font-size:12px;color:#000;transform:scaleX(0.8950);">3,36</div>
<div class="t" id="g1r11v6" style="left:647.89px;top:427px;font-size:12px;color:#000;transform:scaleX(0.8950);">3,36</div>
<div class="t" id="g1r11v7" style="left:712.89px;top:427px;font-size:12px;color:#000;transform:scaleX(0.8950);">3,36</div>
<div class="t" id="g1r12" style="left:18.59px;top:444px;font-size:12px;color:#000;transform:scaleX(0.9091);">[IET80023] Etiqueta</div>
<div class="t" id="g1r12v0" style="left:251.92px;top:444px;font-size:12px;color:#000;transform:scaleX(0.8950);">36,00</div>
<div class="t" id="g1r12v1" style="left:316.92px;top:444px;font-size:12px;color:#000;transform:scaleX(0.8950);">36,00</div>
<div class="t" id="g1r12v2" style="left:381.92px;top:444px;font-size:12px;color:#000;transform:scaleX(0.8950);">36,00</div>
<div class="t" id="g1r12v3" style="left:446.92px;top:444px;font-size:12px;color:#000;transform:scaleX(0.8950);">36,00</div>
<div class="t" id="g1r12v4" style="left:511.92px;top:444px;font-size:12px;color:#000;transform:scaleX(0.8950);">36,00</div>
<div class="t" id="g1r12v5" style="left:576.92px;top:444px;font-size:12px;color:#000;transform:scaleX(0.8950);">36,00</div>
<div class="t" id="g1r12v6" style="left:641.92px;top:444px;font-size:12px;color:#000;transform:scaleX(0.8950);">36,00</div>
<div class="t" id="g1r12v7" style="left:706.92px;top:444px;font-size:12px;color:#000;transform:scaleX(0.8950);">36,00</div>
<div class="t" id="g1r13" style="left:18.56px;top:461px;font-size:12px;color:#000;transform:scaleX(0.9379);">[IHD00000] Hiladilla</div>
<div class="t" id="g1r13v0" style="left:251.92px;top:461px;font-size:12px;color:#000;transform:scaleX(0.8950);">94,30</div>
<div class="t" id="g1r13v1" style="left:316.92px;top:461px;font-size:12px;color:#000;transform:scaleX(0.8950);">96,60</div>
<div class="t" id="g1r13v2" style="left:381.92px;top:461px;font-size:12px;color:#000;transform:scaleX(0.8950);">98,90</div>
<div class="t" id="g1r13v3" style="left:440.95px;top:461px;font-size:12px;color:#000;transform:scaleX(0.8950);">101,20</div>
<div class="t" id="g1r13v4" style="left:505.95px;top:461px;font-size:12px;color:#000;transform:scaleX(0.8950);">103,50</div>
<div class="t" id="g1r13v5" style="left:570.95px;top:461px;font-size:12px;color:#000;transform:scaleX(0.8950);">105,80</div>
<div class="t" id="g1r13v6" style="left:635.95px;top:461px;font-size:12px;color:#000;transform:scaleX(0.8950);">108,10</div>
<div class="t" id="g1r13v7" style="left:701.75px;top:461px;font-size:12px;color:#000;transform:scaleX(0.8950);">110,40</div>
<div class="t" id="g1r14" style="left:18.57px;top:478px;font-size:12px;color:#000;transform:scaleX(0.9257);">[IMA00038] Marquilla</div>
<div class="t" id="g1r14v0" style="left:251.92px;top:478px;font-size:12px;color:#000;transform:scaleX(0.8950);">75,00</div>
<div class="t" id="g1r14v1" style="left:316.92px;top:478px;font-size:12px;color:#000;transform:scaleX(0.8950);">75,00</div>
<div class="t" id="g1r14v2" style="left:381.92px;top:478px;font-size:12px;color:#000;transform:scaleX(0.8950);">75,00</div>
<div class="t" id="g1r14v3" style="left:446.92px;top:478px;font-size:12px;color:#000;transform:scaleX(0.8950);">75,00</div>
<div class="t" id="g1r14v4" style="left:511.92px;top:478px;font-size:12px;color:#000;transform:scaleX(0.8950);">75,00</div>
<div class="t" id="g1r14v5" style="left:576.92px;top:478px;font-size:12px;color:#000;transform:scaleX(0.8950);">75,00</div>
<div class="t" id="g1r14v6" style="left:641.92px;top:478px;font-size:12px;color:#000;transform:scaleX(0.8950);">75,00</div>
<div class="t" id="g1r14v7" style="left:706.92px;top:478px;font-size:12px;color:#000;transform:scaleX(0.8950);">75,00</div>
<div class="t" id="g1r15" style="left:18.57px;top:495px;font-size:12px;color:#000;transform:scaleX(0.9257);">[IMA20013] Marquilla</div>
<div class="t" id="g1r15v0" style="left:251.92px;top:495px;font-size:12px;color:#000;transform:scaleX(0.8950);">26,00</div>
<div class="t" id="g1r15v1" style="left:316.92px;top:495px;font-size:12px;color:#000;transform:scaleX(0.8950);">26,00</div>
<div class="t" id="g1r15v2" style="left:381.92px;top:495px;font-size:12px;color:#000;transform:scaleX(0.8950);">26,00</div>
<div class="t" id="g1r15v3" style="left:446.92px;top:495px;font-size:12px;color:#000;transform:scaleX(0.8950);">26,00</div>
<div class="t" id="g1r15v4" style="left:511.92px;top:495px;font-size:12px;color:#000;transform:scaleX(0.8950);">26,00</div>
<div class="t" id="g1r15v5" style="left:576.92px;top:495px;font-size:12px;color:#000;transform:scaleX(0.8950);">26,00</div>
<div class="t" id="g1r15v6" style="left:641.92px;top:495px;font-size:12px;color:#000;transform:scaleX(0.8950);">26,00</div>
<div class="t" id="g1r15v7" style="left:706.92px;top:495px;font-size:12px;color:#000;transform:scaleX(0.8950);">26,00</div>
<div class="t" id="g1r16" style="left:18.58px;top:512px;font-size:12px;color:#000;transform:scaleX(0.9154);">[IMA70002] Banderill</div>
<div class="t" id="g1r16v0" style="left:251.92px;top:512px;font-size:12px;color:#000;transform:scaleX(0.8950);">45,00</div>
<div class="t" id="g1r16v1" style="left:316.92px;top:512px;font-size:12px;color:#000;transform:scaleX(0.8950);">45,00</div>
<div class="t" id="g1r16v2" style="left:381.92px;top:512px;font-size:12px;color:#000;transform:scaleX(0.8950);">45,00</div>
<div class="t" id="g1r16v3" style="left:446.92px;top:512px;font-size:12px;color:#000;transform:scaleX(0.8950);">45,00</div>
<div class="t" id="g1r16v4" style="left:511.92px;top:512px;font-size:12px;color:#000;transform:scaleX(0.8950);">45,00</div>
<div class="t" id="g1r16v5" style="left:576.92px;top:512px;font-size:12px;color:#000;transform:scaleX(0.8950);">45,00</div>
<div class="t" id="g1r16v6" style="left:641.92px;top:512px;font-size:12px;color:#000;transform:scaleX(0.8950);">45,00</div>
<div class="t" id="g1r16v7" style="left:706.92px;top:512px;font-size:12px;color:#000;transform:scaleX(0.8950);">45,00</div>
<div class="t" id="g1r17" style="left:18.59px;top:529px;font-size:12px;color:#000;transform:scaleX(0.9147);">[IPU50008] Puños (2)</div>
<div class="t" id="g1r17v0" style="left:236.99px;top:529px;font-size:12px;color:#000;transform:scaleX(0.8950);">1.100,00</div>
<div class="t" id="g1r17v1" style="left:301.99px;top:529px;font-size:12px;color:#000;transform:scaleX(0.8950);">1.100,00</div>
<div class="t" id="g1r17v2" style="left:366.99px;top:529px;font-size:12px;color:#000;transform:scaleX(0.8950);">1.100,00</div>
<div class="t" id="g1r17v3" style="left:431.99px;top:529px;font-size:12px;color:#000;transform:scaleX(0.8950);">1.100,00</div>
<div class="t" id="g1r17v4" style="left:496.99px;top:529px;font-size:12px;color:#000;transform:scaleX(0.8950);">1.100,00</div>
<div class="t" id="g1r17v5" style="left:561.99px;top:529px;font-size:12px;color:#000;transform:scaleX(0.8950);">1.100,00</div>
<div class="t" id="g1r17v6" style="left:626.99px;top:529px;font-size:12px;color:#000;transform:scaleX(0.8950);">1.100,00</div>
<div class="t" id="g1r17v7" style="left:691.99px;top:529px;font-size:12px;color:#000;transform:scaleX(0.8950);">1.100,00</div>
<div style="left:15px;top:582px;width:975px;height:2px;background:#fff"></div>
<div class="gb" style="left:15px;top:584px;width:975px;height:70px"></div>
<div class="hdr" style="left:17px;top:586px;width:719px;height:19px"></div>
<div class="hs" style="left:216px;top:588px;height:15px"></div>
<div class="hs" style="left:281px;top:588px;height:15px"></div>
<div class="hs" style="left:346px;top:588px;height:15px"></div>
<div class="hs" style="left:411px;top:588px;height:15px"></div>
<div class="hs" style="left:476px;top:588px;height:15px"></div>
<div class="hs" style="left:541px;top:588px;height:15px"></div>
<div class="hs" style="left:606px;top:588px;height:15px"></div>
<div class="hs" style="left:671px;top:588px;height:15px"></div>
<div class="t" id="g2h0" style="left:273.05px;top:589px;font-size:12px;color:#000;transform:scaleX(0.8600);">2</div>
<div class="hd" style="left:280px;top:598px"></div>
<div class="t" id="g2h1" style="left:338.05px;top:589px;font-size:12px;color:#000;transform:scaleX(0.8600);">4</div>
<div class="hd" style="left:345px;top:598px"></div>
<div class="t" id="g2h2" style="left:403.05px;top:589px;font-size:12px;color:#000;transform:scaleX(0.8600);">6</div>
<div class="hd" style="left:410px;top:598px"></div>
<div class="t" id="g2h3" style="left:468.05px;top:589px;font-size:12px;color:#000;transform:scaleX(0.8600);">8</div>
<div class="hd" style="left:475px;top:598px"></div>
<div class="t" id="g2h4" style="left:527.31px;top:589px;font-size:12px;color:#000;transform:scaleX(0.8600);">10</div>
<div class="hd" style="left:540px;top:598px"></div>
<div class="t" id="g2h5" style="left:592.31px;top:589px;font-size:12px;color:#000;transform:scaleX(0.8600);">12</div>
<div class="hd" style="left:605px;top:598px"></div>
<div class="t" id="g2h6" style="left:657.31px;top:589px;font-size:12px;color:#000;transform:scaleX(0.8600);">14</div>
<div class="hd" style="left:670px;top:598px"></div>
<div class="t" id="g2h7" style="left:723.11px;top:589px;font-size:12px;color:#000;transform:scaleX(0.8600);">16</div>
<div class="row sel" style="top:605px"></div>
<div class="row cy" style="top:622px"></div>
<div class="row wh" style="top:639px"></div>
<div class="vs" style="left:216px;top:605px;height:51px"></div>
<div class="vs" style="left:281px;top:605px;height:51px"></div>
<div class="vs" style="left:346px;top:605px;height:51px"></div>
<div class="vs" style="left:411px;top:605px;height:51px"></div>
<div class="vs" style="left:476px;top:605px;height:51px"></div>
<div class="vs" style="left:541px;top:605px;height:51px"></div>
<div class="vs" style="left:606px;top:605px;height:51px"></div>
<div class="vs" style="left:671px;top:605px;height:51px"></div>
<div class="vs" style="left:736px;top:605px;height:51px"></div>
<div class="hsep" style="top:621px"></div>
<div class="hsep" style="top:638px"></div>
<div class="hsep" style="top:655px"></div>
<div class="t" id="g2r0" style="left:18.56px;top:608px;font-size:12px;color:#000;transform:scaleX(0.9426);">Total fases</div>
<div class="t" id="g2r0v0" style="left:236.99px;top:608px;font-size:12px;color:#000;transform:scaleX(0.8950);">7.847,00</div>
<div class="t" id="g2r0v1" style="left:301.99px;top:608px;font-size:12px;color:#000;transform:scaleX(0.8950);">7.847,00</div>
<div class="t" id="g2r0v2" style="left:366.99px;top:608px;font-size:12px;color:#000;transform:scaleX(0.8950);">7.847,00</div>
<div class="t" id="g2r0v3" style="left:431.99px;top:608px;font-size:12px;color:#000;transform:scaleX(0.8950);">7.847,00</div>
<div class="t" id="g2r0v4" style="left:496.99px;top:608px;font-size:12px;color:#000;transform:scaleX(0.8950);">7.847,00</div>
<div class="t" id="g2r0v5" style="left:561.99px;top:608px;font-size:12px;color:#000;transform:scaleX(0.8950);">7.847,00</div>
<div class="t" id="g2r0v6" style="left:626.99px;top:608px;font-size:12px;color:#000;transform:scaleX(0.8950);">7.847,00</div>
<div class="t" id="g2r0v7" style="left:691.99px;top:608px;font-size:12px;color:#000;transform:scaleX(0.8950);">7.847,00</div>
<div class="t" id="g2r1" style="left:18.54px;top:625px;font-size:12px;color:#000;transform:scaleX(0.9568);">Total Global</div>
<div class="t" id="g2r1v0" style="left:231.02px;top:625px;font-size:12px;color:#000;transform:scaleX(0.8950);">15.918,76</div>
<div class="t" id="g2r1v1" style="left:296.81px;top:625px;font-size:12px;color:#000;transform:scaleX(0.8950);">16.511,06</div>
<div class="t" id="g2r1v2" style="left:361.02px;top:625px;font-size:12px;color:#000;transform:scaleX(0.8950);">16.955,86</div>
<div class="t" id="g2r1v3" style="left:426.02px;top:625px;font-size:12px;color:#000;transform:scaleX(0.8950);">17.400,66</div>
<div class="t" id="g2r1v4" style="left:491.02px;top:625px;font-size:12px;color:#000;transform:scaleX(0.8950);">17.992,96</div>
<div class="t" id="g2r1v5" style="left:556.02px;top:625px;font-size:12px;color:#000;transform:scaleX(0.8950);">18.585,26</div>
<div class="t" id="g2r1v6" style="left:621.02px;top:625px;font-size:12px;color:#000;transform:scaleX(0.8950);">19.177,56</div>
<div class="t" id="g2r1v7" style="left:686.02px;top:625px;font-size:12px;color:#000;transform:scaleX(0.8950);">19.778,26</div>
<div class="t" id="g2r2" style="left:18.56px;top:642px;font-size:12px;color:#000;transform:scaleX(0.9359);">Total materiales</div>
<div class="t" id="g2r2v0" style="left:236.99px;top:642px;font-size:12px;color:#000;transform:scaleX(0.8950);">8.071,76</div>
<div class="t" id="g2r2v1" style="left:301.99px;top:642px;font-size:12px;color:#000;transform:scaleX(0.8950);">8.664,06</div>
<div class="t" id="g2r2v2" style="left:366.99px;top:642px;font-size:12px;color:#000;transform:scaleX(0.8950);">9.108,86</div>
<div class="t" id="g2r2v3" style="left:431.99px;top:642px;font-size:12px;color:#000;transform:scaleX(0.8950);">9.553,66</div>
<div class="t" id="g2r2v4" style="left:491.02px;top:642px;font-size:12px;color:#000;transform:scaleX(0.8950);">10.145,96</div>
<div class="t" id="g2r2v5" style="left:556.02px;top:642px;font-size:12px;color:#000;transform:scaleX(0.8950);">10.738,26</div>
<div class="t" id="g2r2v6" style="left:621.81px;top:642px;font-size:12px;color:#000;transform:scaleX(0.8950);">11.330,56</div>
<div class="t" id="g2r2v7" style="left:686.81px;top:642px;font-size:12px;color:#000;transform:scaleX(0.8950);">11.931,26</div>
<div style="left:7px;top:652px;width:983px;height:1px;background:#5a5a5a"></div>
<div style="left:7px;top:653px;width:983px;height:1px;background:#fde6b4"></div>
</body></html>
